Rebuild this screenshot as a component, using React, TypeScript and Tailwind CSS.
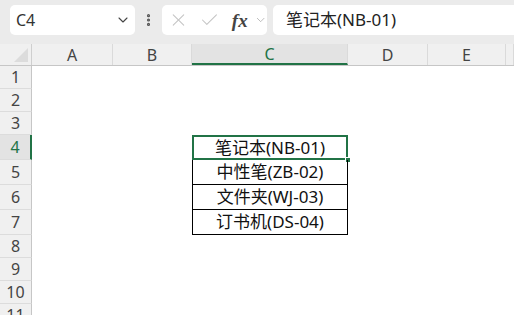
import React from 'react';
import { ChevronDown, EllipsisVertical, X, Check } from 'lucide-react';

const cols = [
  { name: 'A', w: 'w-[81px]' },
  { name: 'B', w: 'w-[79px]' },
  { name: 'C', w: 'w-[156px]' },
  { name: 'D', w: 'w-[80px]' },
  { name: 'E', w: 'w-[78px]' },
  { name: '', w: 'flex-1' },
];

const items: Record<number, string> = {
  4: '笔记本(NB-01)',
  5: '中性笔(ZB-02)',
  6: '文件夹(WJ-03)',
  7: '订书机(DS-04)',
};

const rowH = (r: number) => (r >= 4 && r <= 7 ? 'h-[25px]' : 'h-[23px]');

const App: React.FC = () => {
  return (
    <div
      className="w-[514px] h-[315px] overflow-hidden bg-white text-[#222]"
      style={{ fontFamily: '"Noto Sans", "Noto Sans CJK SC", sans-serif' }}
    >
      {/* formula bar */}
      <div className="h-[44px] bg-[#ebebeb] flex items-start pt-[5px] pl-[10px] gap-[6px]">
        <div className="w-[125px] h-[30px] bg-white rounded-[5px] flex items-center justify-between pl-[6px] pr-[4px]">
          <span className="text-[16px] text-[#333]">C4</span>
          <ChevronDown size={16} strokeWidth={1.6} className="text-[#444]" />
        </div>
        <div className="w-[15px] h-[30px] flex items-center justify-center">
          <EllipsisVertical size={18} strokeWidth={3} className="text-[#555]" />
        </div>
        <div className="w-[105px] h-[30px] bg-white rounded-[5px] flex items-center pl-[6px] gap-[6px]">
          <X size={22} strokeWidth={1.2} className="text-[#c4c4c4]" />
          <Check size={22} strokeWidth={1.2} className="text-[#c4c4c4] ml-[4px]" />
          <span
            className="text-[19px] italic font-bold text-[#444] ml-[6px] leading-none"
            style={{ fontFamily: '"Liberation Serif", serif' }}
          >
            fx
          </span>
          <ChevronDown size={14} strokeWidth={1.4} className="text-[#aaa]" />
        </div>
        <div className="flex-1 h-[30px] bg-white rounded-l-[5px] flex items-center pl-[13px]">
          <span className="text-[17px] text-[#222]">笔记本(NB-01)</span>
        </div>
      </div>

      {/* column headers */}
      <div className="h-[22px] flex bg-[#f0f0f0] border-b border-[#c6c6c6]">
        <div className="w-[32px] h-full border-r border-[#cfcfcf] relative flex items-end justify-end pr-[3px] pb-[3px]">
          <div className="w-0 h-0 border-l-[14px] border-l-transparent border-b-[14px] border-b-[#dcdcdc]" />
        </div>
        {cols.map((c, i) => (
          <div
            key={i}
            className={`${c.w} h-full flex items-center justify-center text-[16px] border-r border-[#dadada] ${
              c.name === 'C' ? 'bg-[#e3e3e3] text-[#217346] border-b-2 border-b-[#217346]' : 'text-[#444]'
            }`}
          >
            {c.name}
          </div>
        ))}
      </div>

      {/* rows */}
      {Array.from({ length: 11 }, (_, i) => i + 1).map((r) => (
        <div key={r} className={`${rowH(r)} flex`}>
          <div
            className={`w-[32px] h-full flex items-center justify-center text-[16px] border-b border-[#dcdcdc] ${
              r === 4
                ? 'bg-[#e3e3e3] text-[#217346] border-r-2 border-r-[#217346]'
                : 'bg-[#f0f0f0] text-[#444] border-r border-r-[#c6c6c6]'
            }`}
          >
            {r}
          </div>
          <div className="w-[160px] h-full" />
          {items[r] ? (
            <div
              className={`w-[156px] h-full relative flex items-center justify-center text-[17px] text-[#111] border-l border-r border-b border-black ${
                r === 4 ? 'border-t' : ''
              }`}
            >
              {items[r]}
              {r === 4 && (
                <>
                  <div className="absolute -left-[1px] -top-[1px] -right-[1px] -bottom-[1px] border-2 border-[#217346]" />
                  <div className="absolute -right-[4px] -bottom-[4px] w-[6px] h-[6px] bg-[#217346] border border-white" />
                </>
              )}
            </div>
          ) : (
            <div className="w-[156px] h-full" />
          )}
          <div className="flex-1 h-full" />
        </div>
      ))}
    </div>
  );
};

export default App;
